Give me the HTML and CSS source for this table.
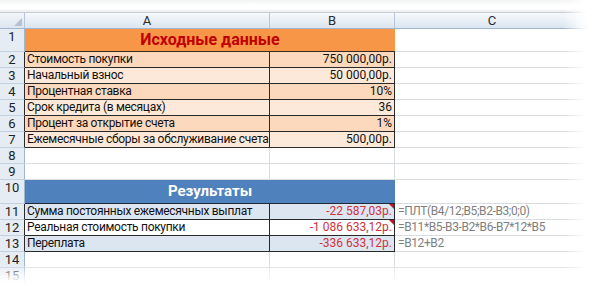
FILE: index.html
```html
<!DOCTYPE html>
<html lang="ru">
<head>
<meta charset="utf-8">
<title>Кредит</title>
<link rel="stylesheet" href="styles.css">
</head>
<body>
<div class="page">
  <div class="topband"></div>
  <div class="sheet">
    <div class="corner"><span class="selall"></span></div>
    <div class="colh">A</div>
    <div class="colh">B</div>
    <div class="colh">C</div>

    <div class="rowh">1</div>
    <div class="title orange">Исходные данные</div>
    <div class="cell"></div>

    <div class="rowh dk">2</div>
    <div class="lbl p2">Стоимость покупки</div>
    <div class="val p2">750 000,00р.</div>
    <div class="cell"></div>

    <div class="rowh dk">3</div>
    <div class="lbl p1">Начальный взнос</div>
    <div class="val p1">50 000,00р.</div>
    <div class="cell"></div>

    <div class="rowh dk">4</div>
    <div class="lbl p2">Процентная ставка</div>
    <div class="val p2">10%</div>
    <div class="cell"></div>

    <div class="rowh dk">5</div>
    <div class="lbl p1">Срок кредита (в месяцах)</div>
    <div class="val p1">36</div>
    <div class="cell"></div>

    <div class="rowh dk">6</div>
    <div class="lbl p2">Процент за открытие счета</div>
    <div class="val p2">1%</div>
    <div class="cell"></div>

    <div class="rowh dk">7</div>
    <div class="lbl p1">Ежемесячные сборы за обслуживание счета</div>
    <div class="val p1">500,00р.</div>
    <div class="cell"></div>

    <div class="rowh">8</div>
    <div class="cell"></div>
    <div class="cell"></div>
    <div class="cell"></div>

    <div class="rowh">9</div>
    <div class="cell"></div>
    <div class="cell"></div>
    <div class="cell"></div>

    <div class="rowh">10</div>
    <div class="title blue">Результаты</div>
    <div class="cell"></div>

    <div class="rowh dk">11</div>
    <div class="lbl b1">Сумма постоянных ежемесячных выплат</div>
    <div class="val b1 neg note">-22 587,03р.</div>
    <div class="cell formula">=ПЛТ(B4/12;B5;B2-B3;0;0)</div>

    <div class="rowh dk">12</div>
    <div class="lbl w">Реальная стоимость покупки</div>
    <div class="val w neg note">-1 086 633,12р.</div>
    <div class="cell formula">=B11*B5-B3-B2*B6-B7*12*B5</div>

    <div class="rowh dk">13</div>
    <div class="lbl b1">Переплата</div>
    <div class="val b1 neg">-336 633,12р.</div>
    <div class="cell formula">=B12+B2</div>

    <div class="rowh">14</div>
    <div class="cell"></div>
    <div class="cell"></div>
    <div class="cell"></div>

    <div class="rowh">15</div>
    <div class="cell"></div>
    <div class="cell"></div>
    <div class="cell"></div>
  </div>
  <div class="fade-right"></div>
  <div class="fade-bottom"></div>
</div>
</body>
</html>
```

FILE: styles.css
```css
html, body {
  margin: 0;
  padding: 0;
  background: #fff;
}

.page {
  position: relative;
  width: 595px;
  height: 286px;
  overflow: hidden;
  padding-top: 12px;
  box-sizing: border-box;
}

.topband {
  position: absolute;
  left: 0;
  top: 0;
  width: 100%;
  height: 12px;
  background: linear-gradient(to bottom, #f2f3f4 0, #ffffff 5px, #ffffff 9px, #e6e8eb 12px);
}

.sheet {
  display: grid;
  grid-template-columns: 25px 245px 125px 195px;
  grid-template-rows: 17px 23px repeat(8, 16px) 24px repeat(5, 16px);
  font-family: Roboto, "Liberation Sans", sans-serif;
  font-size: 12px;
  color: #111;
}

.sheet > div {
  box-sizing: border-box;
  border-right: 1px solid #d9dce0;
  border-bottom: 1px solid #d9dce0;
  white-space: nowrap;
  overflow: hidden;
  line-height: 15px;
  padding: 0 3px;
}

.sheet > .corner {
  position: relative;
  background: linear-gradient(to bottom, #f3f6fa, #dde5ef);
  border-right: 1px solid #b7c6d8;
  border-bottom: 1px solid #9eb6ce;
  border-top: 1px solid #c9ced5;
}

.selall {
  position: absolute;
  right: 2px;
  bottom: 2px;
  width: 0;
  height: 0;
  border-left: 8px solid transparent;
  border-bottom: 8px solid #b4c2d4;
}

.sheet > .colh {
  background: linear-gradient(to bottom, #f6f9fc 0%, #e9eff6 50%, #dbe4ef 100%);
  border-right: 1px solid #b7c6d8;
  border-bottom: 1px solid #9eb6ce;
  border-top: 1px solid #c9ced5;
  text-align: center;
  font-size: 13px;
  line-height: 15px;
  color: #2b2b2b;
}

.sheet > .rowh {
  background: #e6ecf4;
  border-right: 1px solid #9eb6ce;
  border-bottom: 1px solid #c4d0de;
  text-align: center;
  font-size: 13px;
  color: #222;
  padding: 0;
}

.sheet > .rowh.dk {
  border-right-color: #2a2a2a;
}

.sheet > .title {
  grid-column: span 2;
  text-align: center;
  font-weight: bold;
  font-size: 15px;
  border-right: none;
  border-bottom: 1px solid #3a2a20;
}

.sheet > .title.orange {
  background: #f79646;
  color: #c00000;
  font-size: 16px;
  line-height: 22px;
}

.sheet > .title.blue {
  background: #4f81bd;
  color: #fff;
  line-height: 23px;
  border-bottom-color: #1f2a38;
}

.sheet > .lbl,
.sheet > .val {
  border-right-color: #2a2a2a;
  border-bottom-color: #2a2a2a;
}

.sheet > .lbl {
  letter-spacing: -0.3px;
  padding-left: 2px;
}

.sheet > .val {
  text-align: right;
  padding-right: 2px;
  position: relative;
}

.p1 { background: #fde9d9; }
.p2 { background: #fcd9bd; }
.b1 { background: #dce6f1; }
.w  { background: #ffffff; }

.neg { color: #d0323c; }

.note::after {
  content: "";
  position: absolute;
  top: 0;
  right: 0;
  width: 0;
  height: 0;
  border-left: 5px solid transparent;
  border-top: 5px solid #c0141e;
}

.sheet > .formula {
  color: #7f7f7f;
  letter-spacing: -0.4px;
  padding-left: 3px;
}

.fade-right {
  position: absolute;
  top: 0;
  right: 0;
  width: 32px;
  height: 100%;
  background: linear-gradient(to right, rgba(255,255,255,0) 0, rgba(255,255,255,0.85) 60%, #fff 80%);
}

.fade-bottom {
  position: absolute;
  left: 0;
  bottom: 0;
  width: 100%;
  height: 22px;
  background: linear-gradient(to bottom, rgba(255,255,255,0) 0, rgba(255,255,255,0.8) 60%, #fff 90%);
}
```
